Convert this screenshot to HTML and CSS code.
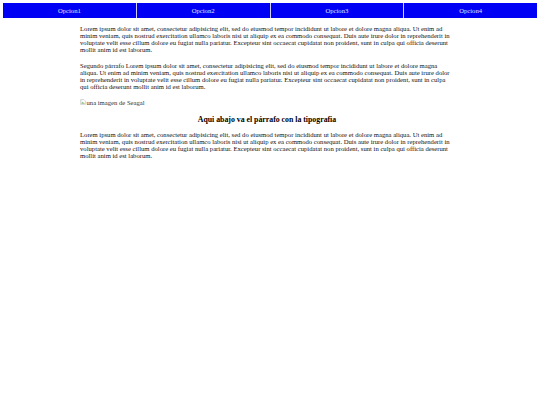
FILE: index.html
```html
<!DOCTYPE html>
<html lang="es">
<head>
<meta charset="utf-8">
<title>Tipografia</title>
<link rel="stylesheet" href="styles.css">
</head>
<body>
<nav class="menu">
  <a class="menu-item" href="#">Opcion1</a>
  <a class="menu-item" href="#">Opcion2</a>
  <a class="menu-item" href="#">Opcion3</a>
  <a class="menu-item" href="#">Opcion4</a>
</nav>
<main class="content">
  <p>Lorem ipsum dolor sit amet, consectetur adipisicing elit, sed do eiusmod tempor incididunt ut labore et dolore magna aliqua. Ut enim ad minim veniam, quis nostrud exercitation ullamco laboris nisi ut aliquip ex ea commodo consequat. Duis aute irure dolor in reprehenderit in voluptate velit esse cillum dolore eu fugiat nulla pariatur. Excepteur sint occaecat cupidatat non proident, sunt in culpa qui officia deserunt mollit anim id est laborum.</p>
  <p>Segundo párrafo Lorem ipsum dolor sit amet, consectetur adipisicing elit, sed do eiusmod tempor incididunt ut labore et dolore magna aliqua. Ut enim ad minim veniam, quis nostrud exercitation ullamco laboris nisi ut aliquip ex ea commodo consequat. Duis aute irure dolor in reprehenderit in voluptate velit esse cillum dolore eu fugiat nulla pariatur. Excepteur sint occaecat cupidatat non proident, sunt in culpa qui officia deserunt mollit anim id est laborum.</p>
  <p class="picture"><svg class="broken" viewBox="0 0 16 16" aria-hidden="true"><path d="M1.5 1.5h9l4 4v9h-13z" fill="#fff" stroke="#9a9a9a"/><path d="M3 12l3-4 2 2.5 2-1.5 3 3z" fill="#5a9a3a"/><circle cx="5" cy="5" r="1.3" fill="#6aa0d8"/></svg><span>una imagen de Seagal</span></p>
  <h3 class="title">Aqui abajo va el párrafo con la tipografia</h3>
  <p class="after-title">Lorem ipsum dolor sit amet, consectetur adipisicing elit, sed do eiusmod tempor incididunt ut labore et dolore magna aliqua. Ut enim ad minim veniam, quis nostrud exercitation ullamco laboris nisi ut aliquip ex ea commodo consequat. Duis aute irure dolor in reprehenderit in voluptate velit esse cillum dolore eu fugiat nulla pariatur. Excepteur sint occaecat cupidatat non proident, sunt in culpa qui officia deserunt mollit anim id est laborum.</p>
</main>
</body>
</html>
```
FILE: styles.css
```css
html, body {
  margin: 0;
  background: #fff;
}
body {
  padding: 3px;
  font-family: "Liberation Serif", "Times New Roman", serif;
  font-size: 6.65px;
  color: #111;
}
.menu {
  display: flex;
  background: #0000f5;
  height: 15px;
}
.menu-item {
  flex: 1;
  display: flex;
  align-items: center;
  justify-content: center;
  color: #e0e0ff;
  text-decoration: none;
  border-left: 1px solid #d0d0ff;
}
.menu-item:first-child {
  border-left: none;
}
.content {
  margin: 0 83px 0 77px;
}
.content p {
  margin: 9px 0;
}
.content p:first-child {
  margin-top: 6.6px;
}
.content p.after-title {
  margin-top: 7.8px;
}
.picture {
  display: flex;
  align-items: center;
  color: #333;
}
.broken {
  width: 6px;
  height: 6px;
  margin-right: 0.5px;
}
.title {
  font-size: 7.8px;
  text-align: center;
  color: #000;
  margin: 7.8px 0;
}
```
